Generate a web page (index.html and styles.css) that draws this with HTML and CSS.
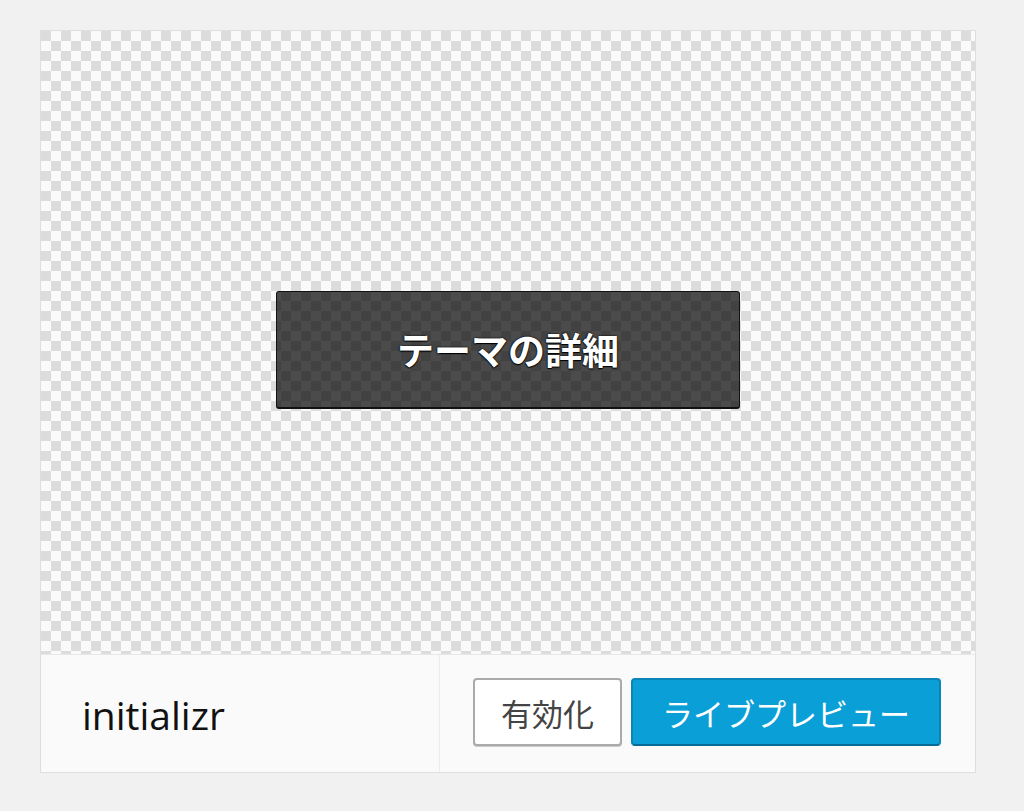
FILE: index.html
```html
<!DOCTYPE html>
<html lang="ja">
<head>
<meta charset="utf-8">
<link rel="stylesheet" href="styles.css">
</head>
<body>
<div class="page">
  <div class="theme">
    <div class="screenshot">
      <span class="more-details">テーマの詳細</span>
    </div>
    <div class="footer">
      <h3 class="theme-name">initializr</h3>
      <div class="actions">
        <button class="btn">有効化</button>
        <button class="btn btn-primary">ライブプレビュー</button>
      </div>
    </div>
  </div>
</div>
</body>
</html>
```
FILE: styles.css
```css
html, body {
  margin: 0;
  padding: 0;
  background: #f1f1f1;
  font-family: "Open Sans", "Noto Sans CJK JP", sans-serif;
}
.page {
  padding: 30px 0 0 40px;
}
.theme {
  width: 934px;
  border: 1px solid #dedede;
  box-shadow: 0 1px 1px rgba(0,0,0,0.04);
  background: #fff;
  display: flex;
  flex-direction: column;
}
.screenshot {
  height: 623px;
  display: flex;
  align-items: center;
  justify-content: center;
  padding-top: 14px;
  box-sizing: border-box;
  background-color: #fafafa;
  background-image: conic-gradient(#fafafa 25%, #dcdcdc 0 50%, #fafafa 0 75%, #dcdcdc 0);
  background-size: 20px 20px;
}
.more-details {
  width: 462px;
  height: 115px;
  display: flex;
  align-items: center;
  justify-content: center;
  background: rgba(0,0,0,0.7);
  border: 1px solid #111;
  border-bottom-width: 2px;
  border-radius: 3px;
  color: #fff;
  font-family: "Noto Sans CJK JP", sans-serif;
  font-weight: 700;
  font-size: 37px;
  text-shadow: 0 1px 1px #000, 0 0 2px #000, 0 0 1px #000;
}
.footer {
  height: 117px;
  border-top: 1px solid #e8e8e8;
  background: #fafafa;
  display: flex;
}
.theme-name {
  width: 357px;
  margin: 0;
  padding-left: 41px;
  border-right: 1px solid #ececec;
  display: flex;
  align-items: center;
  font-weight: 400;
  font-size: 39px;
  color: #111;
  padding-top: 1px;
  box-sizing: content-box;
}
.actions {
  flex: 1;
  display: flex;
  justify-content: flex-end;
  align-items: center;
  gap: 9px;
  padding-right: 34px;
  padding-bottom: 3px;
}
.btn {
  height: 68px;
  padding: 0 26px;
  font-family: "Noto Sans CJK JP", sans-serif;
  font-size: 31px;
  color: #444;
  background: #fff;
  border: 2px solid #aaa;
  border-radius: 4px;
  box-shadow: 0 1px 0 #ccc;
}
.btn-primary {
  background: #0a9fd6;
  border-color: #0b84b7;
  border-bottom-color: #086a95;
  color: #fff;
  box-shadow: none;
  padding: 0 29px;
}
```
